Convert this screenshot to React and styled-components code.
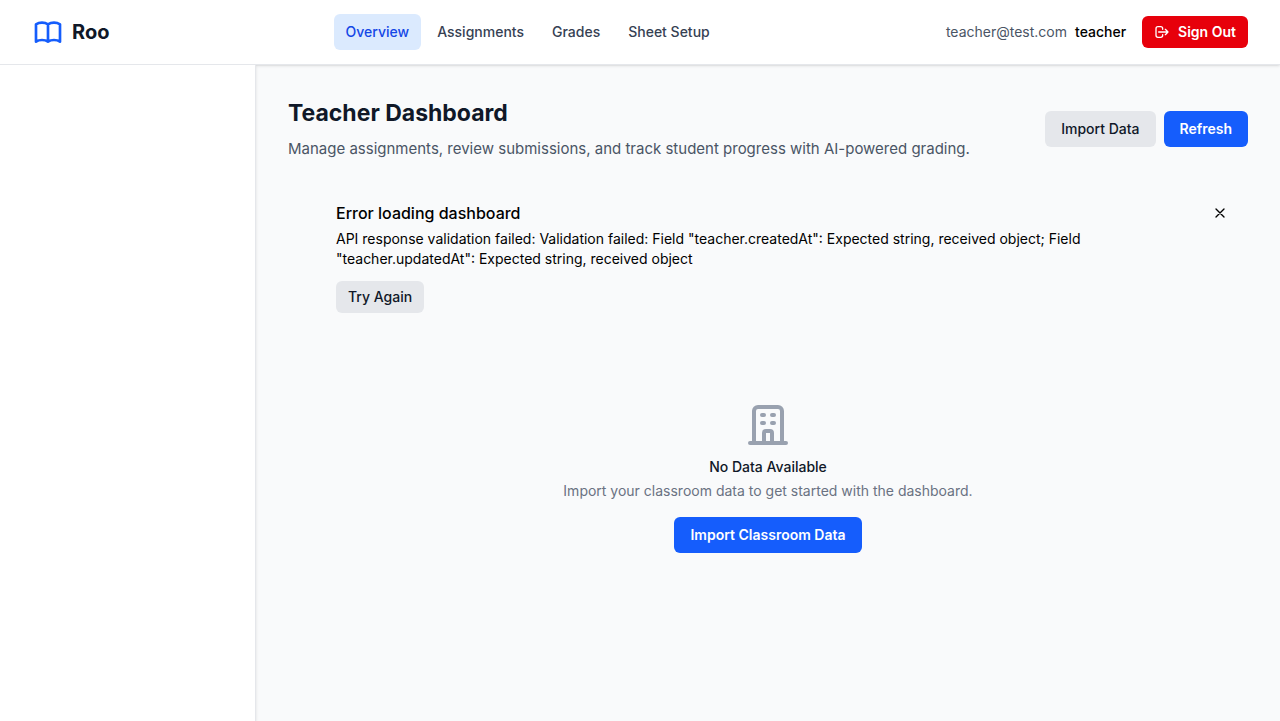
import React from 'react';
import styled, { createGlobalStyle, css } from 'styled-components';

const GlobalStyle = createGlobalStyle`
  *, *::before, *::after { box-sizing: border-box; }
  body {
    margin: 0;
    font-family: Inter, "Liberation Sans", sans-serif;
    font-size: 14px;
    line-height: 20px;
    color: #000;
    background: #f9fafb;
  }
  h1, h2, h3, p { margin: 0; }
  svg { display: block; flex-shrink: 0; }
`;

const Page = styled.div`
  min-height: 100vh;
  display: flex;
  flex-direction: column;
`;

const Header = styled.header`
  display: flex;
  align-items: center;
  justify-content: space-between;
  padding: 14px 32px;
  background: #fff;
  border-bottom: 1px solid #e5e7eb;
  box-shadow: 0 1px 3px rgba(0, 0, 0, 0.1), 0 1px 2px -1px rgba(0, 0, 0, 0.1);
`;

const Brand = styled.a`
  display: flex;
  align-items: center;
  gap: 8px;
  font-size: 20px;
  line-height: 28px;
  font-weight: 700;
  color: #101828;
  text-decoration: none;
  svg { color: #155dfc; }
`;

const Nav = styled.nav`
  display: flex;
  gap: 4px;
`;

const NavLink = styled.a`
  padding: 8px 12px;
  border-radius: 6px;
  font-weight: 500;
  text-decoration: none;
  color: ${(p) => (p.$active ? '#1447e6' : '#364153')};
  background: ${(p) => (p.$active ? '#dbeafe' : 'transparent')};
`;

const Account = styled.div`
  display: flex;
  align-items: center;
  gap: 16px;
`;

const User = styled.div`
  display: flex;
  gap: 8px;
`;

const Email = styled.span`
  color: #4a5565;
`;

const Role = styled.span`
  font-weight: 500;
`;

const variants = {
  primary: css`color: #fff; background: #155dfc; font-weight: 600;`,
  secondary: css`color: #101828; background: #e5e7eb; font-weight: 500;`,
  danger: css`color: #fff; background: #e7000b; font-weight: 600;`,
};

const Button = styled.button`
  display: inline-flex;
  align-items: center;
  justify-content: center;
  gap: 8px;
  height: ${(p) => (p.$small ? 32 : 36)}px;
  padding: 0 ${(p) => (p.$small ? 12 : 16)}px;
  border: 0;
  border-radius: 6px;
  font: inherit;
  cursor: pointer;
  ${(p) => variants[p.$variant || 'primary']}
`;

const Body = styled.div`
  flex: 1;
  display: flex;
`;

const Sidebar = styled.aside`
  width: 256px;
  flex-shrink: 0;
  background: #fff;
  border-right: 1px solid #e5e7eb;
  box-shadow: 0 1px 3px rgba(0, 0, 0, 0.1), 0 1px 2px -1px rgba(0, 0, 0, 0.1);
  clip-path: inset(0 -4px 0 0);
`;

const Main = styled.main`
  flex: 1;
  min-width: 0;
  display: flex;
  flex-direction: column;
  gap: 24px;
  padding: 32px;
`;

const PageHead = styled.div`
  display: flex;
  align-items: center;
  justify-content: space-between;
`;

const Title = styled.h1`
  font-size: 23px;
  line-height: 32px;
  font-weight: 700;
  color: #101828;
`;

const Subtitle = styled.p`
  margin-top: 8px;
  font-size: 15px;
  line-height: 24px;
  color: #4a5565;
`;

const Actions = styled.div`
  display: flex;
  gap: 8px;
`;

const Alert = styled.section`
  display: flex;
  align-items: flex-start;
  justify-content: space-between;
  padding: 16px 16px 16px 48px;
`;

const AlertContent = styled.div`
  max-width: 768px;
`;

const AlertTitle = styled.h2`
  margin-bottom: 4px;
  font-size: 16px;
  line-height: 24px;
  font-weight: 500;
`;

const AlertText = styled.p`
  margin-bottom: 12px;
`;

const CloseButton = styled.button`
  display: flex;
  padding: 4px;
  border: 0;
  background: transparent;
  color: #000;
  cursor: pointer;
`;

const Empty = styled.section`
  display: flex;
  flex-direction: column;
  align-items: center;
  padding: 48px 0;
  svg { color: #99a1af; }
`;

const EmptyTitle = styled.h3`
  margin-top: 8px;
  font-size: 14px;
  line-height: 20px;
  font-weight: 500;
  color: #101828;
`;

const EmptyText = styled.p`
  margin: 4px 0 16px;
  color: #6a7282;
`;

const Icon = ({ size, d }) => (
  <svg
    width={size}
    height={size}
    viewBox="0 0 24 24"
    fill="none"
    stroke="currentColor"
    strokeWidth={2}
    strokeLinecap="round"
    strokeLinejoin="round"
    aria-hidden="true"
  >
    <path d={d} />
  </svg>
);

const BOOK = 'M12 6.253v13m0-13C10.832 5.477 9.246 5 7.5 5S4.168 5.477 3 6.253v13C4.168 18.477 5.754 18 7.5 18s3.332.477 4.5 1.253m0-13C13.168 5.477 14.754 5 16.5 5c1.747 0 3.332.477 4.5 1.253v13C19.832 18.477 18.247 18 16.5 18c-1.746 0-3.332.477-4.5 1.253';
const LOGOUT = 'M17 16l4-4m0 0l-4-4m4 4H7m6 4v1a3 3 0 01-3 3H6a3 3 0 01-3-3V7a3 3 0 013-3h4a3 3 0 013 3v1';
const CLOSE = 'M6 18L18 6M6 6l12 12';
const BUILDING = 'M19 21V5a2 2 0 00-2-2H7a2 2 0 00-2 2v16m14 0h2m-2 0h-5m-9 0H3m2 0h5M9 7h1m-1 4h1m4-4h1m-1 4h1m-5 10v-5a1 1 0 011-1h2a1 1 0 011 1v5m-4 0h4';

const links = ['Overview', 'Assignments', 'Grades', 'Sheet Setup'];

export default function App() {
  return (
    <Page>
      <GlobalStyle />
      <Header>
        <Brand href="#">
          <Icon size={32} d={BOOK} />
          Roo
        </Brand>
        <Nav>
          {links.map((label, i) => (
            <NavLink key={label} href="#" $active={i === 0}>{label}</NavLink>
          ))}
        </Nav>
        <Account>
          <User>
            <Email>teacher@test.com</Email>
            <Role>teacher</Role>
          </User>
          <Button $variant="danger" $small>
            <Icon size={16} d={LOGOUT} />
            Sign Out
          </Button>
        </Account>
      </Header>
      <Body>
        <Sidebar />
        <Main>
          <PageHead>
            <div>
              <Title>Teacher Dashboard</Title>
              <Subtitle>
                Manage assignments, review submissions, and track student progress with AI-powered grading.
              </Subtitle>
            </div>
            <Actions>
              <Button $variant="secondary">Import Data</Button>
              <Button>Refresh</Button>
            </Actions>
          </PageHead>
          <Alert role="alert">
            <AlertContent>
              <AlertTitle>Error loading dashboard</AlertTitle>
              <AlertText>
                API response validation failed: Validation failed: Field "teacher.createdAt": Expected
                string, received object; Field "teacher.updatedAt": Expected string, received object
              </AlertText>
              <Button $variant="secondary" $small>Try Again</Button>
            </AlertContent>
            <CloseButton aria-label="Dismiss">
              <Icon size={16} d={CLOSE} />
            </CloseButton>
          </Alert>
          <Empty>
            <Icon size={48} d={BUILDING} />
            <EmptyTitle>No Data Available</EmptyTitle>
            <EmptyText>Import your classroom data to get started with the dashboard.</EmptyText>
            <Button>Import Classroom Data</Button>
          </Empty>
        </Main>
      </Body>
    </Page>
  );
}
